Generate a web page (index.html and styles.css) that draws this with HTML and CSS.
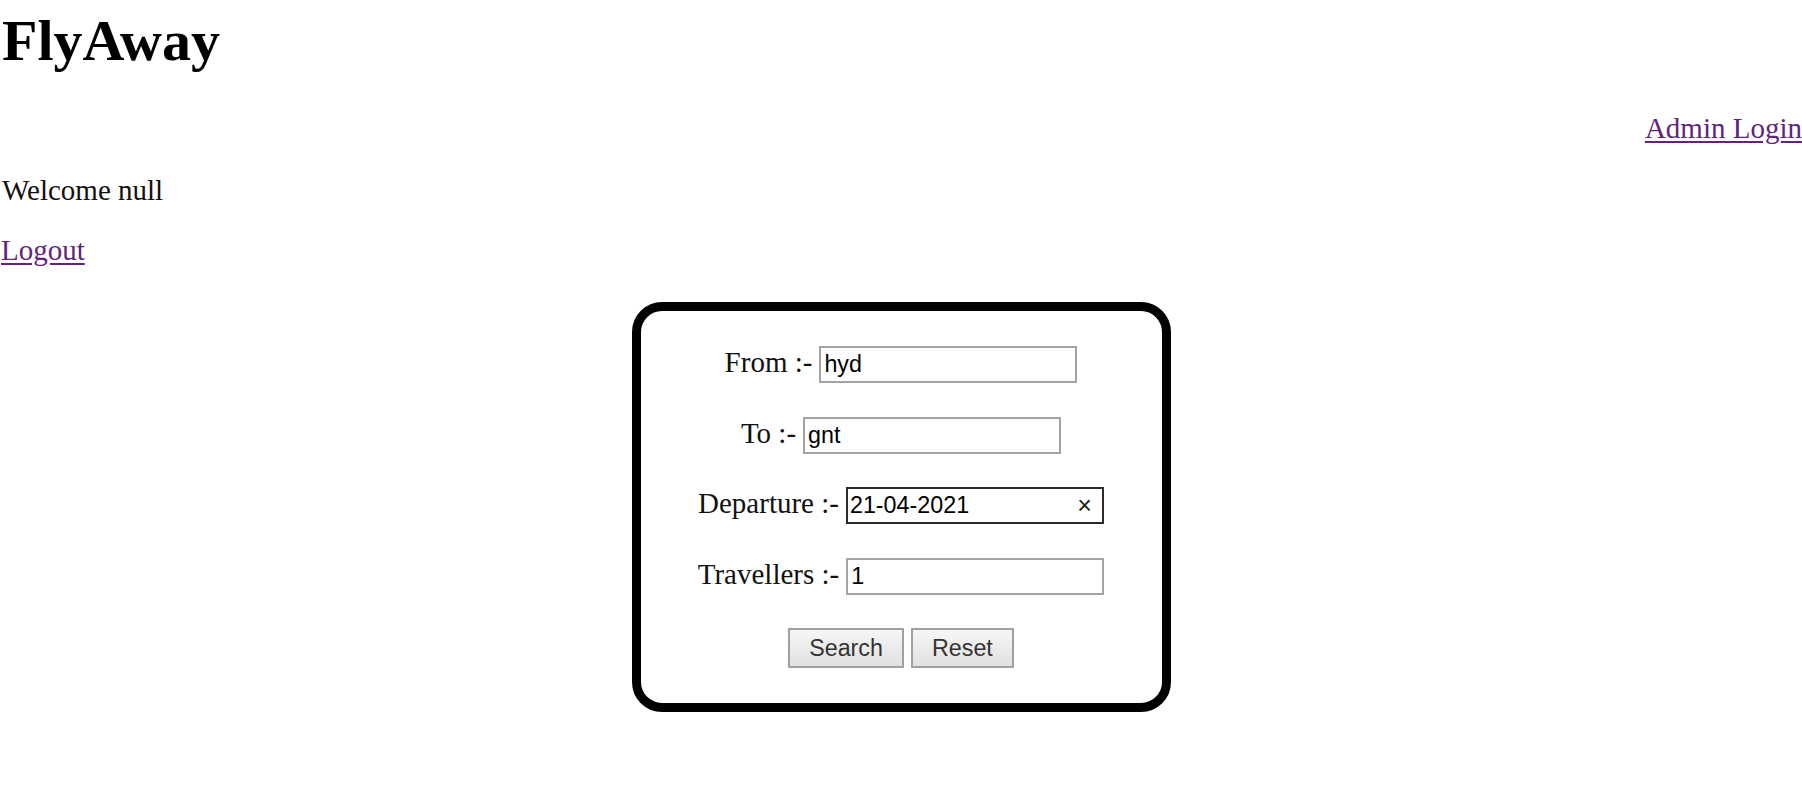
FILE: index.html
```html
<!DOCTYPE html>
<html>
<head>
<meta charset="utf-8">
<title>FlyAway</title>
<link rel="stylesheet" href="styles.css">
</head>
<body>
<h1 class="title">FlyAway</h1>
<p class="admin"><a class="link" href="#">Admin Login</a></p>
<p class="welcome">Welcome null</p>
<p class="logout"><a class="link" href="#">Logout</a></p>
<form class="search-box">
  <div class="row">
    <label class="label">From :-</label>
    <input class="field" type="text" value="hyd">
  </div>
  <div class="row">
    <label class="label">To :-</label>
    <input class="field" type="text" value="gnt">
  </div>
  <div class="row">
    <label class="label">Departure :-</label>
    <span class="date-field">
      <input class="date-input" type="text" value="21-04-2021">
      <span class="clear">×</span>
    </span>
  </div>
  <div class="row">
    <label class="label">Travellers :-</label>
    <input class="field" type="text" value="1">
  </div>
  <div class="row buttons">
    <button class="btn" type="button">Search</button>
    <button class="btn" type="button">Reset</button>
  </div>
</form>
</body>
</html>
```

FILE: styles.css
```css
html, body {
  margin: 0;
  padding: 0;
  background: #ffffff;
}

body {
  font-family: "Liberation Serif", "Times New Roman", serif;
  font-size: 29px;
  line-height: 33px;
  color: #000000;
}

.title {
  margin: 8px 0 38px;
  padding-left: 2px;
  font-size: 58px;
  line-height: 66px;
  font-weight: bold;
}

.admin {
  margin: 0 0 29px;
  text-align: right;
}

.welcome {
  margin: 0 0 27px;
  padding-left: 2px;
  color: #111111;
}

.logout {
  margin: 0 0 35px;
  padding-left: 1px;
}

.link {
  color: #62247f;
  text-decoration: underline;
  text-underline-offset: 3px;
}

.search-box {
  box-sizing: border-box;
  width: 539px;
  height: 410px;
  margin: 0 auto;
  border: 9px solid #000000;
  border-radius: 30px;
  padding: 35px 0 35px;
  display: flex;
  flex-direction: column;
  gap: 33.5px;
}

.row {
  display: flex;
  justify-content: center;
  align-items: baseline;
  gap: 7px;
  height: 37px;
}

.label {
  color: #111111;
}

.field,
.date-field {
  box-sizing: border-box;
  width: 258px;
  height: 37px;
  border: 2px solid #a3a3a3;
  padding: 0 3px;
  font-family: "Liberation Sans", Arial, sans-serif;
  font-size: 23.3px;
  color: #000000;
  background: #ffffff;
  outline: none;
  margin: 0;
}

.date-field {
  display: inline-flex;
  align-items: center;
  border-color: #2b2b2b;
  padding: 0 10px 0 2px;
}

.date-input {
  flex: 1;
  min-width: 0;
  border: 0;
  padding: 0;
  margin: 0;
  height: 33px;
  font-family: "Liberation Sans", Arial, sans-serif;
  font-size: 23.3px;
  color: #000000;
  background: transparent;
  outline: none;
}

.clear {
  font-family: "Liberation Sans", Arial, sans-serif;
  font-size: 25px;
  color: #222222;
  line-height: 1;
}

.buttons {
  height: 40px;
}

.btn {
  box-sizing: border-box;
  height: 40px;
  padding: 0 19px;
  border: 2px solid #a0a0a0;
  border-radius: 1px;
  background: linear-gradient(#f6f6f6, #e1e1e1);
  font-family: "Liberation Sans", Arial, sans-serif;
  font-size: 23.3px;
  color: #333333;
  margin: 0;
}
```
